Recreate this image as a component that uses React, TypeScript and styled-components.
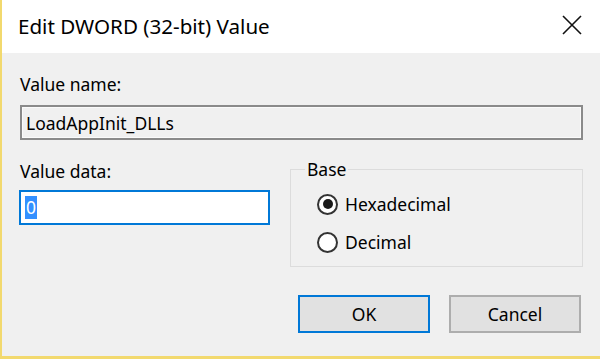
import React from 'react';
import styled, { createGlobalStyle } from 'styled-components';

const GlobalStyle = createGlobalStyle`
  html, body {
    margin: 0;
    padding: 0;
    background: #f0f0f0;
  }
  body {
    font-family: "Noto Sans", "Open Sans", sans-serif;
    color: #000;
  }
`;

const Window = styled.div`
  width: 600px;
  height: 359px;
  box-sizing: border-box;
  display: flex;
  flex-direction: column;
  border-left: 2px solid #f2d96e;
  border-bottom: 3px solid #f2d96e;
  background: #f0f0f0;
  overflow: hidden;
`;

const TitleBar = styled.div`
  height: 53px;
  flex-shrink: 0;
  background: #fff;
  display: flex;
  align-items: center;
  justify-content: space-between;
  padding-left: 16px;
`;

const Title = styled.span`
  font-size: 20.6px;
  margin-top: -2px;
`;

const CloseButton = styled.div`
  width: 46px;
  height: 53px;
  margin-right: 5px;
  padding-bottom: 4px;
  box-sizing: border-box;
  display: flex;
  align-items: center;
  justify-content: center;
`;

const Body = styled.div`
  flex: 1;
  padding: 20px 17px 0 18px;
  display: flex;
  flex-direction: column;
`;

const Label = styled.div`
  font-size: 17.5px;
  line-height: 22px;
  height: 22px;
`;

const NameBox = styled.div`
  margin-top: 10px;
  height: 35px;
  box-sizing: border-box;
  border: 2px solid #8a8a8a;
  box-shadow: inset 0 0 0 1px #fafafa;
  background: #f0f0f0;
  padding: 0 4px;
  display: flex;
  align-items: center;
  font-size: 17.5px;
`;

const Middle = styled.div`
  margin-top: 20px;
  display: grid;
  grid-template-columns: 251px 293px;
  column-gap: 20px;
  align-items: start;
  margin-left: -1px;
`;

const DataColumn = styled.div`
  display: flex;
  flex-direction: column;
  padding-left: 1px;
`;

const DataInput = styled.div`
  margin-top: 8px;
  margin-left: -1px;
  width: 251px;
  height: 35px;
  box-sizing: border-box;
  border: 2px solid #0078d7;
  background: #fff;
  display: flex;
  align-items: center;
  padding-left: 4px;
  font-size: 17.5px;
`;

const Selected = styled.span`
  background: #3390ff;
  color: #fff;
  padding: 0 1px;
  line-height: 23px;
`;

const Group = styled.fieldset`
  margin: -1px 0 0;
  padding: 11px 0 0 26px;
  height: 108px;
  box-sizing: border-box;
  border: 1px solid #dcdcdc;
  display: flex;
  flex-direction: column;
  gap: 10px;
  min-width: 0;
`;

const Legend = styled.legend`
  font-size: 17.5px;
  padding: 0 2px;
  margin-left: -12px;
  line-height: 20px;
`;

const RadioRow = styled.label`
  display: flex;
  align-items: center;
  gap: 7px;
  font-size: 17.5px;
  height: 28px;
`;

const RadioCircle = styled.span<{ $checked?: boolean }>`
  width: 21px;
  height: 21px;
  box-sizing: border-box;
  border-radius: 50%;
  border: 2px solid #333;
  background: #fff;
  display: flex;
  align-items: center;
  justify-content: center;
  &::after {
    content: '';
    width: 10px;
    height: 10px;
    border-radius: 50%;
    background: #1a1a1a;
    display: ${p => (p.$checked ? 'block' : 'none')};
  }
`;

const Buttons = styled.div`
  margin-top: 28px;
  display: flex;
  justify-content: flex-end;
  gap: 19px;
  padding-right: 2px;
`;

const Button = styled.div<{ $default?: boolean }>`
  width: 132px;
  height: 38px;
  box-sizing: border-box;
  background: #e1e1e1;
  border: 2px solid ${p => (p.$default ? '#0078d7' : '#adadad')};
  display: flex;
  align-items: center;
  justify-content: center;
  font-size: 17.5px;
`;

export default function App() {
  return (
    <>
      <GlobalStyle />
      <Window>
        <TitleBar>
          <Title>Edit DWORD (32-bit) Value</Title>
          <CloseButton>
            <svg width="20" height="20" viewBox="0 0 20 20">
              <path d="M1 1 L19 19 M19 1 L1 19" stroke="#111" strokeWidth="1.6" fill="none" />
            </svg>
          </CloseButton>
        </TitleBar>
        <Body>
          <Label>Value name:</Label>
          <NameBox>LoadAppInit_DLLs</NameBox>
          <Middle>
            <DataColumn>
              <Label>Value data:</Label>
              <DataInput>
                <Selected>0</Selected>
              </DataInput>
            </DataColumn>
            <Group>
              <Legend>Base</Legend>
              <RadioRow>
                <RadioCircle $checked />
                Hexadecimal
              </RadioRow>
              <RadioRow>
                <RadioCircle />
                Decimal
              </RadioRow>
            </Group>
          </Middle>
          <Buttons>
            <Button $default>OK</Button>
            <Button>Cancel</Button>
          </Buttons>
        </Body>
      </Window>
    </>
  );
}
